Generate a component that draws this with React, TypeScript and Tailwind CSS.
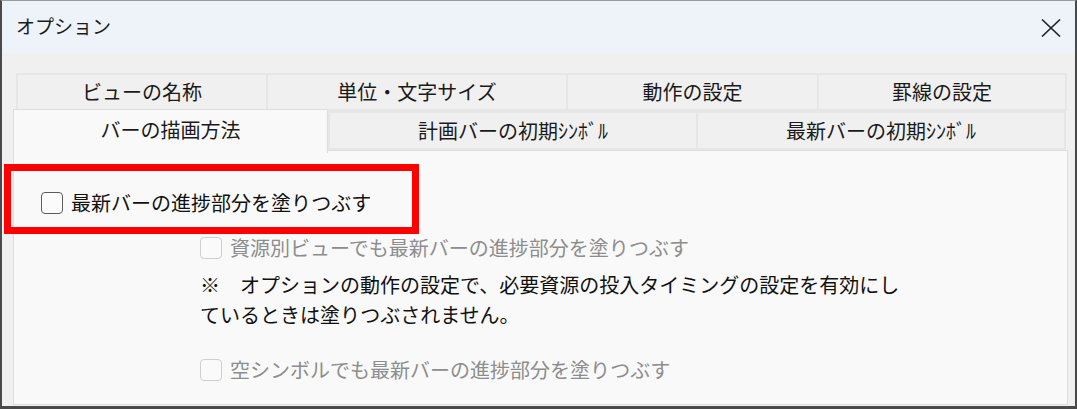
import { ReactNode } from 'react'

const jp = "font-['Noto_Sans_CJK_JP','Noto_Sans',sans-serif]"

function CheckRow({ label, disabled }: { label: string; disabled?: boolean }) {
  return (
    <div className="flex items-center h-[30px]">
      <span
        className={`w-[22px] h-[22px] rounded-[4px] border-[1.5px] ${
          disabled ? 'border-[#cfcfcf] bg-[#fafafa]' : 'border-[#5c5c5c] bg-[#fbfbfb]'
        }`}
      />
      <span className={`ml-[8px] text-[20px] leading-[30px] ${disabled ? 'text-[#8d8d8d]' : 'text-[#111]'}`}>
        {label}
      </span>
    </div>
  )
}

function Tab({ w, children, className = '' }: { w: string; children: ReactNode; className?: string }) {
  return (
    <div className={`${w} flex items-center justify-center border-2 border-[#e6e6e6] -ml-[2px] first:ml-0 text-[20px] text-[#1a1a1a] ${className}`}>
      {children}
    </div>
  )
}

export default function App() {
  return (
    <div className={`${jp} relative w-[1077px] h-[409px] flex flex-col border-l-2 border-r-2 border-b-[3px] border-t border-[#4a4a4a] border-t-[#9a9a9a] bg-[#f0f0f0]`}>
      {/* Title bar */}
      <div className="h-[52px] bg-[#eef3f9] flex items-center justify-between pl-[14px] pr-[14px]">
        <span className="text-[19px] text-[#1a1a1a] -mt-[2px]">オプション</span>
        <svg width="20" height="18" viewBox="0 0 20 18" className="mt-[1px]">
          <path d="M1 0.5 L19 17.5 M19 0.5 L1 17.5" stroke="#222" strokeWidth="1.6" fill="none" />
        </svg>
      </div>

      {/* Body */}
      <div className="flex-1 flex flex-col pt-[20px] pb-[1px]">
        {/* Tab row 1 */}
        <div className="flex ml-[14px] h-[38px]">
          <Tab w="w-[252px]">ビューの名称</Tab>
          <Tab w="w-[302px]">単位・文字サイズ</Tab>
          <Tab w="w-[253px]">動作の設定</Tab>
          <Tab w="w-[250px]">罫線の設定</Tab>
        </div>

        {/* Tab row 2 */}
        <div className="flex ml-[11px] h-[39px] items-start">
          <div className="relative z-10 -mt-[2px] w-[315px] h-[44px] flex items-center justify-center pb-[4px] bg-[#f9f9f9] border border-b-0 border-[#dedede] text-[20px] text-[#1a1a1a]">
            バーの描画方法
          </div>
          <div className="flex h-[39px]">
            <Tab w="w-[370px] ml-0">計画バーの初期ｼﾝﾎﾞﾙ</Tab>
            <Tab w="w-[370px]">最新バーの初期ｼﾝﾎﾞﾙ</Tab>
          </div>
        </div>

        {/* Panel */}
        <div className="flex-1 ml-[11px] w-[1055px] bg-[#f9f9f9] border border-[#dedede] pt-[37px] pl-[27px]">
          <CheckRow label="最新バーの進捗部分を塗りつぶす" />
          <div className="ml-[159px] mt-[15px]">
            <CheckRow label="資源別ビューでも最新バーの進捗部分を塗りつぶす" disabled />
            <p className="mt-[7px] text-[20px] leading-[30px] text-[#111]">
              ※　オプションの動作の設定で、必要資源の投入タイミングの設定を有効にし
              <br />
              ているときは塗りつぶされません。
            </p>
            <div className="mt-[25px]">
              <CheckRow label="空シンボルでも最新バーの進捗部分を塗りつぶす" disabled />
            </div>
          </div>
        </div>
      </div>

      {/* Annotation */}
      <div className="absolute left-[2px] top-[163px] w-[415px] h-[70px] border-[7px] border-[#ff0000]" />
    </div>
  )
}
